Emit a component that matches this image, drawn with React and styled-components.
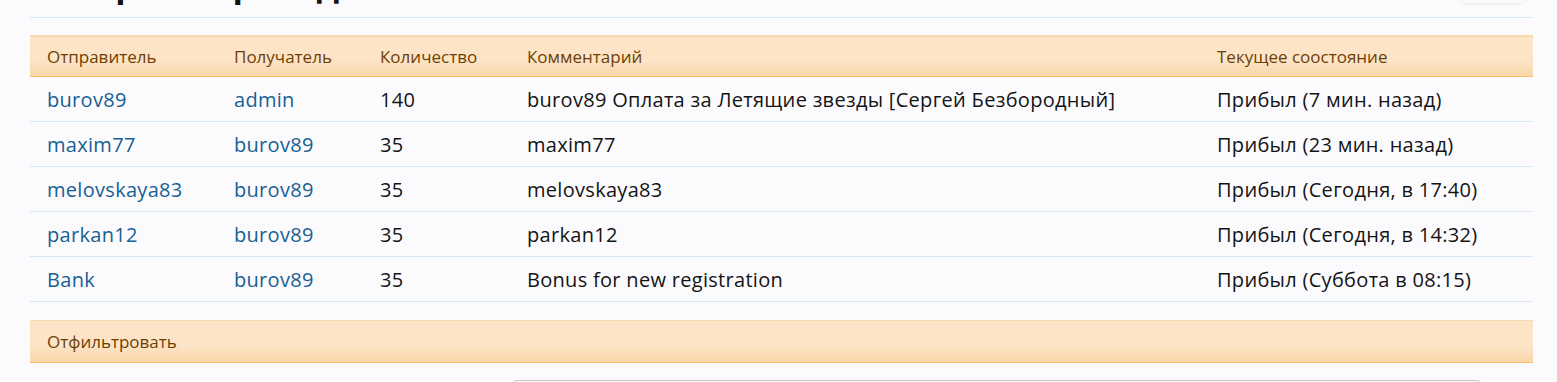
import React from "react";
import styled, { createGlobalStyle } from "styled-components";

const Global = createGlobalStyle`
  html, body { margin: 0; padding: 0; background: #fbfbfe; }
  body { font-family: "Open Sans", "Noto Sans", sans-serif; color: #141414; overflow: hidden; }
`;

const Page = styled.div`
  padding: 0 24px 0 30px;
  width: 1503px;
`;

const TitleBar = styled.div`
  display: flex;
  justify-content: space-between;
  align-items: flex-start;
  height: 17px;
  border-bottom: 1px solid #d7e6f3;
  overflow: hidden;
`;

const Title = styled.h1`
  margin: -36px 0 0 0;
  font-size: 34px;
  font-weight: 700;
  line-height: 40px;
  color: #141414;
  white-space: nowrap;
`;

const TopButton = styled.div`
  width: 68px;
  height: 30px;
  margin: -27px 6px 0 0;
  border-radius: 8px;
  background: #fbfbfe;
  box-shadow: 0 1px 3px rgba(0, 0, 0, 0.07);
`;

const Table = styled.table`
  width: 100%;
  margin-top: 17px;
  border-collapse: collapse;
  table-layout: fixed;
`;

const HeadRow = styled.tr`
  background: linear-gradient(to bottom, #fde4c7 0%, #fde4c7 60%, #f8d6a9 100%);
  border-top: 1px solid #f9d9b0;
  border-bottom: 1px solid #f9bc6d;
`;

const Th = styled.th`
  height: 40px;
  padding: 0 0 0 17px;
  text-align: left;
  font-size: 17px;
  font-weight: 400;
  color: #6d3f03;
  vertical-align: middle;
  white-space: nowrap;
`;

const Row = styled.tr`
  border-bottom: 1px solid #d7e6f3;
`;

const Td = styled.td`
  height: 44px;
  padding: 0 0 0 17px;
  font-size: 20px;
  letter-spacing: 0.3px;
  color: #141414;
  vertical-align: middle;
  white-space: nowrap;
`;

const Link = styled.a`
  color: #176093;
  text-decoration: none;
`;

const FilterBar = styled.div`
  margin-top: 18px;
  height: 41px;
  display: flex;
  align-items: center;
  padding-left: 17px;
  font-size: 17px;
  color: #6d3f03;
  background: linear-gradient(to bottom, #fde4c7 0%, #fde4c7 60%, #f8d6a9 100%);
  border-top: 1px solid #f9d9b0;
  border-bottom: 1px solid #f9bc6d;
`;

const FieldRow = styled.div`
  display: flex;
  padding: 17px 51px 0 482px;
`;

const Field = styled.div`
  flex: 1;
  height: 30px;
  border: 1px solid #c3c3c3;
  border-radius: 5px;
  background: #fdfdfd;
`;

const rows = [
  ["burov89", "admin", "140", "burov89 Оплата за Летящие звезды [Сергей Безбородный]", "Прибыл (7 мин. назад)"],
  ["maxim77", "burov89", "35", "maxim77", "Прибыл (23 мин. назад)"],
  ["melovskaya83", "burov89", "35", "melovskaya83", "Прибыл (Сегодня, в 17:40)"],
  ["parkan12", "burov89", "35", "parkan12", "Прибыл (Сегодня, в 14:32)"],
  ["Bank", "burov89", "35", "Bonus for new registration", "Прибыл (Суббота в 08:15)"],
];

export default function App() {
  return (
    <>
      <Global />
      <Page>
        <TitleBar>
          <Title>История переводов</Title>
          <TopButton />
        </TitleBar>
        <Table>
          <colgroup>
            <col style={{ width: 187 }} />
            <col style={{ width: 146 }} />
            <col style={{ width: 147 }} />
            <col style={{ width: 690 }} />
            <col />
          </colgroup>
          <thead>
            <HeadRow>
              <Th>Отправитель</Th>
              <Th>Получатель</Th>
              <Th>Количество</Th>
              <Th>Комментарий</Th>
              <Th>Текущее соостояние</Th>
            </HeadRow>
          </thead>
          <tbody>
            {rows.map((r, i) => (
              <Row key={i}>
                <Td><Link href="#">{r[0]}</Link></Td>
                <Td><Link href="#">{r[1]}</Link></Td>
                <Td>{r[2]}</Td>
                <Td>{r[3]}</Td>
                <Td>{r[4]}</Td>
              </Row>
            ))}
          </tbody>
        </Table>
        <FilterBar>Отфильтровать</FilterBar>
        <FieldRow>
          <Field />
        </FieldRow>
      </Page>
    </>
  );
}
